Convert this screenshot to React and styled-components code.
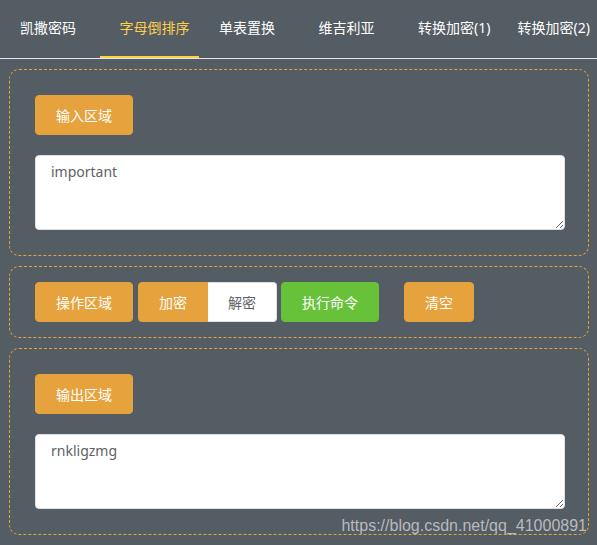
import React, { useState } from "react";
import styled, { createGlobalStyle } from "styled-components";

const GlobalStyle = createGlobalStyle`
  html, body {
    margin: 0;
    padding: 0;
    background: #545c64;
  }
  body {
    font-family: "Noto Sans", "Noto Sans CJK SC", sans-serif;
    font-size: 14px;
  }
  * {
    box-sizing: border-box;
  }
`;

const Page = styled.div`
  position: relative;
  min-height: 545px;
  background: #545c64;
`;

const Menu = styled.ul`
  display: flex;
  margin: 0;
  padding: 0;
  list-style: none;
  border-bottom: 1px solid #e6e6e6;
`;

const MenuItem = styled.li`
  width: 100px;
  height: 58px;
  line-height: 56px;
  padding-left: 20px;
  white-space: nowrap;
  font-size: 14px;
  color: ${props => (props.active ? "#ffd04b" : "#ffffff")};
  border-bottom: 2px solid ${props => (props.active ? "#ffd04b" : "transparent")};
  cursor: pointer;
`;

const Main = styled.div`
  display: flex;
  flex-direction: column;
  gap: 10px;
  padding: 10px 8px 0 9px;
`;

const Section = styled.div`
  display: flex;
  flex-direction: ${props => (props.row ? "row" : "column")};
  align-items: ${props => (props.row ? "center" : "flex-start")};
  padding: ${props => (props.row ? "15px 25px" : "25px 23px 25px 25px")};
  border: 1px dashed #e6a23c;
  border-radius: 10px;
`;

const Button = styled.button`
  height: 40px;
  padding: 0 20px;
  margin-left: ${props => props.gap || 0}px;
  border: 1px solid ${props => props.color || "#e6a23c"};
  border-radius: 4px;
  background: ${props => props.color || "#e6a23c"};
  color: #ffffff;
  font-family: "Noto Sans CJK SC", sans-serif;
  font-size: 14px;
  font-weight: 400;
  white-space: nowrap;
  cursor: pointer;
`;

const Segmented = styled.div`
  display: flex;
  margin-left: 5px;
  height: 40px;
`;

const SegmentButton = styled.label`
  width: ${props => (props.first ? 70 : 69)}px;
  height: 40px;
  line-height: 38px;
  text-align: center;
  font-family: "Noto Sans CJK SC", sans-serif;
  font-size: 14px;
  border: 1px solid ${props => (props.checked ? "#e6a23c" : "#dcdfe6")};
  border-left-width: ${props => (props.first ? 1 : 0)}px;
  border-radius: ${props => (props.first ? "4px 0 0 4px" : "0 4px 4px 0")};
  background: ${props => (props.checked ? "#e6a23c" : "#ffffff")};
  color: ${props => (props.checked ? "#ffffff" : "#606266")};
  cursor: pointer;
`;

const TextArea = styled.textarea`
  display: block;
  width: 100%;
  height: 75px;
  margin-top: 20px;
  padding: 5px 15px;
  border: 1px solid #dcdfe6;
  border-radius: 4px;
  background: #ffffff;
  color: #606266;
  font-family: "Noto Sans", "Noto Sans CJK SC", sans-serif;
  font-size: 14px;
  line-height: 1.5;
  outline: none;
  resize: vertical;
`;

const Watermark = styled.div`
  position: absolute;
  right: 10px;
  top: 517px;
  color: rgba(205, 205, 205, 0.85);
  font-family: "Liberation Sans", Arial, sans-serif;
  font-size: 16px;
  pointer-events: none;
`;

const tabs = ["凯撒密码", "字母倒排序", "单表置换", "维吉利亚", "转换加密(1)", "转换加密(2)"];

export default function App() {
  const [active, setActive] = useState(1);
  const [mode, setMode] = useState("encrypt");
  const [input, setInput] = useState("important");
  const [output, setOutput] = useState("rnkligzmg");

  return (
    <Page>
      <GlobalStyle />
      <Menu>
        {tabs.map((t, i) => (
          <MenuItem key={t} active={i === active} onClick={() => setActive(i)}>
            {t}
          </MenuItem>
        ))}
      </Menu>
      <Main>
        <Section>
          <Button>输入区域</Button>
          <TextArea value={input} onChange={e => setInput(e.target.value)} />
        </Section>
        <Section row>
          <Button>操作区域</Button>
          <Segmented>
            <SegmentButton first checked={mode === "encrypt"} onClick={() => setMode("encrypt")}>
              加密
            </SegmentButton>
            <SegmentButton checked={mode === "decrypt"} onClick={() => setMode("decrypt")}>
              解密
            </SegmentButton>
          </Segmented>
          <Button gap={4} color="#67c23a">执行命令</Button>
          <Button gap={25}>清空</Button>
        </Section>
        <Section>
          <Button>输出区域</Button>
          <TextArea value={output} onChange={e => setOutput(e.target.value)} />
        </Section>
      </Main>
      <Watermark>https://blog.csdn.net/qq_41000891</Watermark>
    </Page>
  );
}
